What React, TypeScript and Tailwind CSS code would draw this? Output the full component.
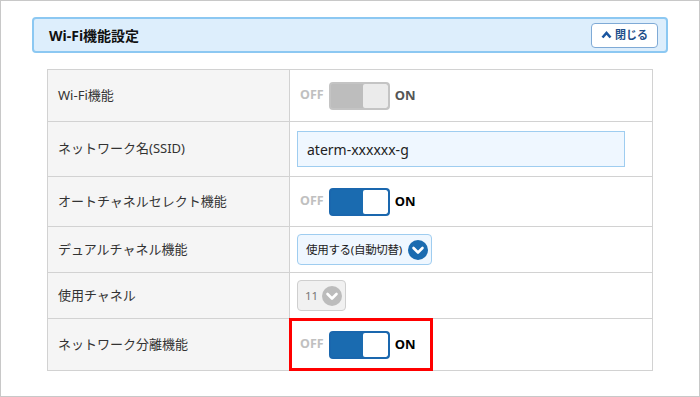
const font = {
  fontFamily: '"Noto Sans", "Noto Sans CJK JP", sans-serif',
};

function Toggle({ disabled = false }: { disabled?: boolean }) {
  return (
    <div className="flex items-center gap-[5px]">
      <span className="text-[12.5px] font-bold text-[#c0c0c0]">OFF</span>
      <div
        className={`flex h-[28px] w-[61px] overflow-hidden rounded-[4px] border-2 ${
          disabled ? 'border-[#c4c4c4] bg-[#bdbdbd]' : 'border-[#1a67ae] bg-[#1a6bb0]'
        }`}
      >
        <div className="flex-1" />
        <div
          className={`w-[25px] rounded-[2px] ${
            disabled ? 'bg-[#ebebeb]' : 'bg-white'
          }`}
        />
      </div>
      <span
        className={`text-[13px] font-bold ${disabled ? 'text-[#555]' : 'text-black'}`}
      >
        ON
      </span>
    </div>
  );
}

function Chevron({ color }: { color: string }) {
  return (
    <svg width="20" height="20" viewBox="0 0 20 20" className="shrink-0">
      <circle cx="10" cy="10" r="10" fill={color} />
      <path
        d="M5.5 8 L10 12.5 L14.5 8"
        fill="none"
        stroke="white"
        strokeWidth="2.6"
        strokeLinecap="round"
        strokeLinejoin="round"
      />
    </svg>
  );
}

const rows = [
  { label: 'Wi-Fi機能', h: 'h-[52px]', pad: 'pl-[10px]' },
  { label: 'ネットワーク名(SSID)', h: 'h-[55px]', pad: 'pl-[7px]' },
  { label: 'オートチャネルセレクト機能', h: 'h-[50px]', pad: 'pl-[10px]' },
  { label: 'デュアルチャネル機能', h: 'h-[46px]', pad: 'pl-[7px]' },
  { label: '使用チャネル', h: 'h-[46px]', pad: 'pl-[7px]' },
  { label: 'ネットワーク分離機能', h: 'h-[52px]', pad: 'pl-[10px]' },
];

function Value({ i }: { i: number }) {
  if (i === 0) return <Toggle disabled />;
  if (i === 1)
    return (
      <div className="flex h-[36px] w-[328px] items-center border border-[#9fcdf0] bg-[#eff7ff] px-[9px] text-[14px] text-[#222]">
        aterm-xxxxxx-g
      </div>
    );
  if (i === 2) return <Toggle />;
  if (i === 3)
    return (
      <div className="flex h-[31px] w-[135px] items-center justify-between whitespace-nowrap rounded-[4px] border border-[#9fcdf0] bg-[#eff7ff] pl-[8px] pr-[3px] text-[11.5px] tracking-[-0.3px] text-[#222]">
        <span>使用する(自動切替)</span>
        <Chevron color="#1a6bb0" />
      </div>
    );
  if (i === 4)
    return (
      <div className="flex h-[31px] w-[49px] items-center justify-between rounded-[4px] border border-[#cfcfcf] bg-[#f1f1f1] pl-[7px] pr-[3px] text-[11.5px] text-[#777]">
        <span>11</span>
        <Chevron color="#bcbcbc" />
      </div>
    );
  return (
    <>
      <div className="absolute -left-px -top-px h-[53px] w-[144px] border-[3px] border-[#ff0000]" />
      <Toggle />
    </>
  );
}

export default function App() {
  return (
    <div
      className="h-[397px] w-[700px] border border-[#c8c8c8] bg-white pl-[31px] pt-[16px]"
      style={font}
    >
      <div className="flex h-[36px] w-[636px] items-center justify-between rounded-[4px] border-2 border-[#8cc8f2] bg-[#ddeefc] pl-[15px] pr-[8px]">
        <span className="text-[14px] font-bold text-[#111]">Wi-Fi機能設定</span>
        <button className="flex h-[25px] w-[67px] items-center justify-center gap-[3px] rounded-[4px] border border-[#7faad6] bg-white text-[11px] font-bold text-[#1f4f8a]">
          <svg width="11" height="8" viewBox="0 0 11 8">
            <path
              d="M1.5 6.5 L5.5 2 L9.5 6.5"
              fill="none"
              stroke="#1a56a0"
              strokeWidth="2.6"
              strokeLinejoin="miter"
            />
          </svg>
          閉じる
        </button>
      </div>

      <div className="ml-[15px] mt-[16px] w-[606px] border border-b-0 border-[#d2d2d2]">
        {rows.map((r, i) => (
          <div key={r.label} className={`flex ${r.h} border-b border-[#d2d2d2]`}>
            <div className="flex w-[242px] items-center border-r border-[#d2d2d2] bg-[#f5f5f5] pl-[10px] text-[13px] text-[#333]">
              {r.label}
            </div>
            <div className={`relative flex flex-1 items-center ${r.pad}`}>
              <Value i={i} />
            </div>
          </div>
        ))}
      </div>
    </div>
  );
}
